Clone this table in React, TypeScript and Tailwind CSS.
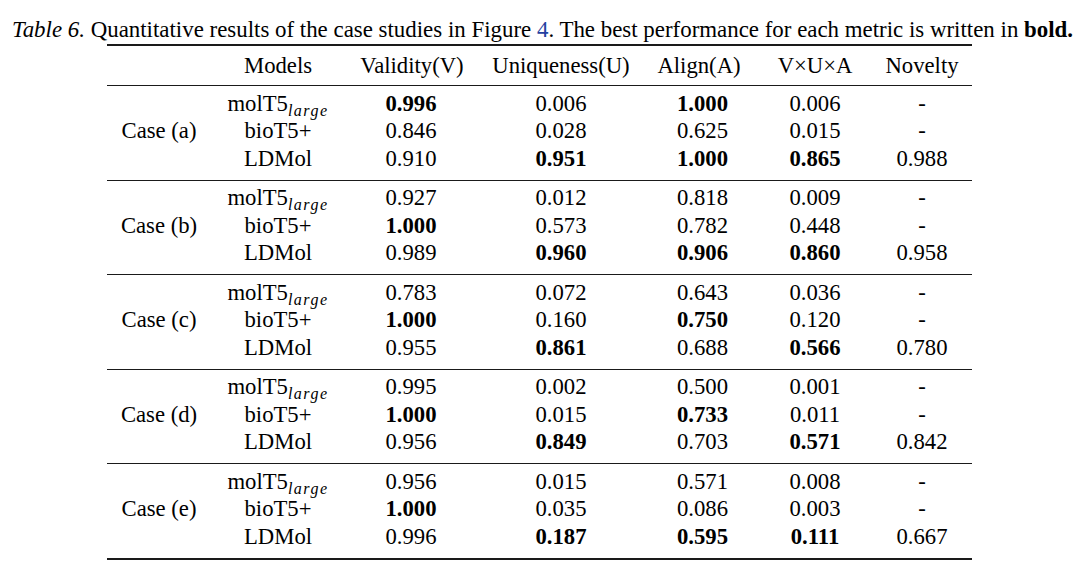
import React from 'react';

type Cell = { v: string; b?: boolean };
type Row = { model: 'mol' | 'bio' | 'ld'; cells: Cell[] };
type Group = { label: string; rows: Row[] };

const c = (v: string, b = false): Cell => ({ v, b });

const groups: Group[] = [
  {
    label: 'Case (a)',
    rows: [
      { model: 'mol', cells: [c('0.996', true), c('0.006'), c('1.000', true), c('0.006'), c('-')] },
      { model: 'bio', cells: [c('0.846'), c('0.028'), c('0.625'), c('0.015'), c('-')] },
      { model: 'ld', cells: [c('0.910'), c('0.951', true), c('1.000', true), c('0.865', true), c('0.988')] },
    ],
  },
  {
    label: 'Case (b)',
    rows: [
      { model: 'mol', cells: [c('0.927'), c('0.012'), c('0.818'), c('0.009'), c('-')] },
      { model: 'bio', cells: [c('1.000', true), c('0.573'), c('0.782'), c('0.448'), c('-')] },
      { model: 'ld', cells: [c('0.989'), c('0.960', true), c('0.906', true), c('0.860', true), c('0.958')] },
    ],
  },
  {
    label: 'Case (c)',
    rows: [
      { model: 'mol', cells: [c('0.783'), c('0.072'), c('0.643'), c('0.036'), c('-')] },
      { model: 'bio', cells: [c('1.000', true), c('0.160'), c('0.750', true), c('0.120'), c('-')] },
      { model: 'ld', cells: [c('0.955'), c('0.861', true), c('0.688'), c('0.566', true), c('0.780')] },
    ],
  },
  {
    label: 'Case (d)',
    rows: [
      { model: 'mol', cells: [c('0.995'), c('0.002'), c('0.500'), c('0.001'), c('-')] },
      { model: 'bio', cells: [c('1.000', true), c('0.015'), c('0.733', true), c('0.011'), c('-')] },
      { model: 'ld', cells: [c('0.956'), c('0.849', true), c('0.703'), c('0.571', true), c('0.842')] },
    ],
  },
  {
    label: 'Case (e)',
    rows: [
      { model: 'mol', cells: [c('0.956'), c('0.015'), c('0.571'), c('0.008'), c('-')] },
      { model: 'bio', cells: [c('1.000', true), c('0.035'), c('0.086'), c('0.003'), c('-')] },
      { model: 'ld', cells: [c('0.996'), c('0.187', true), c('0.595', true), c('0.111', true), c('0.667')] },
    ],
  },
];

// the numbers sit a little off the header centres
const valueCols = [
  'col-start-3 pl-[4px]',
  'col-start-4',
  'col-start-5 pl-[5px]',
  'col-start-6',
  'col-start-7',
];
const rowStart = ['row-start-1', 'row-start-2', 'row-start-3'];
const cols = 'grid grid-cols-[104px_134px_128px_176px_102px_128px_86px_7px]';

function ModelName({ model }: { model: Row['model'] }) {
  if (model === 'bio') return <>bioT5+</>;
  if (model === 'ld') return <>LDMol</>;
  return (
    <>
      molT5
      <span className="relative top-[5px] text-[16px] italic leading-none tracking-[1.5px]">large</span>
    </>
  );
}

export default function App() {
  return (
    <div className="h-[575px] w-[1080px] bg-white text-black [font-family:'Liberation_Serif','Times_New_Roman',serif]">
      <p className="whitespace-nowrap pl-[12px] pt-[16px] text-[22.9px] leading-[28px]">
        <span className="italic">Table 6.</span> Quantitative results of the case studies in Figure{' '}
        <span className="text-[#2440a0]">4</span>. The best performance for each metric is written in{' '}
        <span className="font-bold">bold.</span>
      </p>

      <div className="ml-[107px] w-[865px] border-y-2 border-[#1a1a1a] text-[22.7px]">
        <div className={`${cols} h-[40px] items-center border-b border-[#1a1a1a] text-center leading-[39px]`}>
          <div />
          <div>Models</div>
          <div className="pl-[6px]">Validity(V)</div>
          <div>Uniqueness(U)</div>
          <div className="pr-[2px]">Align(A)</div>
          <div>V×U×A</div>
          <div>Novelty</div>
          <div />
        </div>

        {groups.map((g, gi) => (
          <div
            key={g.label}
            className={`${cols} grid-rows-[27.5px_27.5px_27.5px] pb-[7.6px] pt-[3.5px] text-center leading-[27.5px] ${
              gi < groups.length - 1 ? 'border-b border-[#1a1a1a]' : ''
            }`}
          >
            <div className="col-start-1 row-span-3 row-start-1 flex items-center justify-center">{g.label}</div>
            {g.rows.map((r, ri) => (
              <React.Fragment key={ri}>
                <div className={`col-start-2 ${rowStart[ri]} whitespace-nowrap`}>
                  <ModelName model={r.model} />
                </div>
                {r.cells.map((cell, ci) => (
                  <div key={ci} className={`${valueCols[ci]} ${rowStart[ri]} ${cell.b ? 'font-bold' : ''}`}>
                    {cell.v}
                  </div>
                ))}
              </React.Fragment>
            ))}
          </div>
        ))}
      </div>
    </div>
  );
}
